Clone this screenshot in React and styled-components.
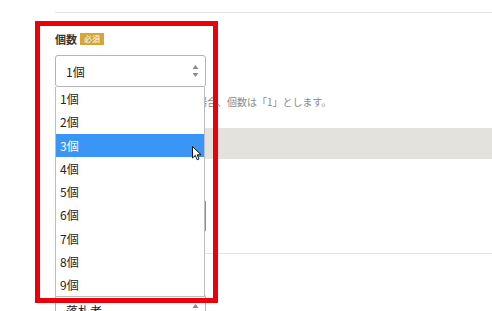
import React from "react";
import styled, { createGlobalStyle } from "styled-components";

const Global = createGlobalStyle`
  html, body { margin: 0; padding: 0; background: #fff; }
  body { font-family: "Noto Sans CJK JP", "Noto Sans", sans-serif; color: #333; }
`;

const Page = styled.div`
  position: relative;
  width: 492px;
  height: 311px;
  overflow: hidden;
  padding-left: 55px;
  box-sizing: border-box;
`;

const Rule = styled.div`
  height: 1px;
  background: #e4e4e4;
  margin-top: ${(p) => p.$top}px;
  margin-right: -55px;
`;

const Field = styled.div`
  display: flex;
  flex-direction: column;
  padding-top: 20px;
`;

const LabelRow = styled.div`
  display: flex;
  align-items: center;
  gap: 3px;
  height: 12px;
`;

const Label = styled.span`
  font-size: 11px;
  font-weight: 700;
  color: #333;
  line-height: 12px;
`;

const Badge = styled.span`
  display: inline-flex;
  align-items: center;
  justify-content: center;
  width: 24px;
  height: 12px;
  background: #d6a534;
  color: #fff;
  font-size: 8px;
  line-height: 12px;
`;

const SelectWrap = styled.div`
  position: relative;
  width: 151px;
  margin-top: ${(p) => p.$top}px;
`;

const SelectBox = styled.div`
  box-sizing: border-box;
  height: 32px;
  border: 1px solid #b4b4b4;
  border-radius: 3px;
  display: flex;
  align-items: center;
  justify-content: space-between;
  padding: 0 6px 0 10px;
  font-size: 12px;
  color: #222;
  background: #fff;
`;

const Arrows = styled.svg`
  width: 7px;
  height: 14px;
  display: block;
`;

const List = styled.ul`
  position: absolute;
  top: 100%;
  left: 0;
  width: 150px;
  margin: 0;
  padding: 0;
  list-style: none;
  box-sizing: border-box;
  border: 1px solid #bdbdbd;
  border-top: none;
  background: #fff;
  z-index: 2;
`;

const Item = styled.li`
  height: 23.25px;
  display: flex;
  align-items: center;
  padding-left: 4px;
  font-size: 12px;
  color: ${(p) => (p.$active ? "#fff" : "#222")};
  background: ${(p) => (p.$active ? "#3995f6" : "transparent")};
`;

const Helper = styled.p`
  margin: 8px 0 0;
  padding-left: 22px;
  font-size: 10px;
  line-height: 14px;
  color: #8a8a8a;
  white-space: nowrap;
`;

const Band = styled.div`
  height: 31px;
  margin-top: 19px;
  margin-right: -55px;
  background: #e3e2dd;
`;

const InputBox = styled.div`
  box-sizing: border-box;
  width: 151px;
  height: 32px;
  margin-top: 41px;
  border: 1px solid #8e8e8e;
  border-radius: 2px;
`;

const Frame = styled.div`
  position: absolute;
  left: 35px;
  top: 21px;
  width: 183px;
  height: 282px;
  box-sizing: border-box;
  border: 5px solid #ec0009;
  z-index: 3;
  pointer-events: none;
`;

const Cursor = styled.svg`
  position: absolute;
  left: 192px;
  top: 146px;
  width: 10px;
  height: 15px;
  z-index: 4;
`;

const UpDown = () => (
  <Arrows viewBox="0 0 7 14">
    <path d="M3.5 1 L6.5 5 L0.5 5 Z" fill="#8c8c8c" />
    <path d="M3.5 13 L6.5 9 L0.5 9 Z" fill="#8c8c8c" />
  </Arrows>
);

const items = ["1個", "2個", "3個", "4個", "5個", "6個", "7個", "8個", "9個"];

export default function App() {
  return (
    <>
      <Global />
      <Page>
        <Rule $top={12} />
        <Field>
          <LabelRow>
            <Label>個数</Label>
            <Badge>必須</Badge>
          </LabelRow>
          <SelectWrap $top={10}>
            <SelectBox>
              <span>1個</span>
              <UpDown />
            </SelectBox>
            <List>
              {items.map((t, i) => (
                <Item key={t} $active={i === 2}>
                  {t}
                </Item>
              ))}
            </List>
          </SelectWrap>
          <Helper>※数量を指定しない入札の場合、個数は「1」とします。</Helper>
        </Field>
        <Band />
        <InputBox />
        <Rule $top={21} />
        <SelectWrap $top={40}>
          <SelectBox>
            <span>落札者</span>
            <UpDown />
          </SelectBox>
        </SelectWrap>
        <Frame />
        <Cursor viewBox="0 0 10 15">
          <path
            d="M0.5 0.5 L0.5 12 L3.3 9.4 L5.2 13.8 L7 13 L5.2 8.8 L9 8.8 Z"
            fill="#fff"
            stroke="#000"
            strokeWidth="0.9"
            strokeLinejoin="round"
          />
        </Cursor>
      </Page>
    </>
  );
}
